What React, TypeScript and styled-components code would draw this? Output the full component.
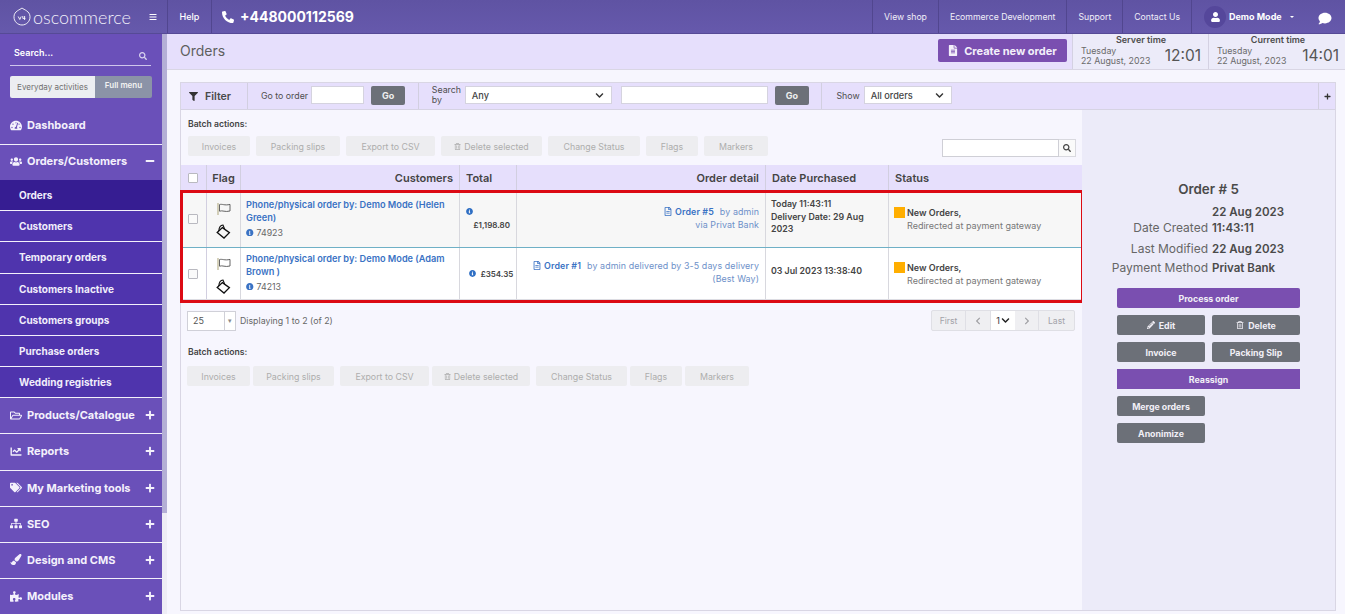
import styled, { createGlobalStyle } from "styled-components";
import {
  FaBars,
  FaChartLine,
  FaChevronDown,
  FaChevronLeft,
  FaChevronRight,
  FaComment,
  FaFileAlt,
  FaFilter,
  FaInfoCircle,
  FaMinus,
  FaPaintBrush,
  FaPencilAlt,
  FaPhoneAlt,
  FaPlus,
  FaPuzzlePiece,
  FaRegFileAlt,
  FaRegFolderOpen,
  FaRegTrashAlt,
  FaSearch,
  FaSitemap,
  FaTachometerAlt,
  FaTags,
  FaUser,
  FaUsers,
} from "react-icons/fa";

const GlobalStyle = createGlobalStyle`
  html, body {
    margin: 0;
    padding: 0;
    height: 100%;
    overflow: hidden;
    background: #f7f6fe;
    font-family: Inter, "Liberation Sans", sans-serif;
    color: #424242;
  }
  * { box-sizing: border-box; }
`;

const subMenu = [
  { name: "Orders", active: true },
  { name: "Customers" },
  { name: "Temporary orders" },
  { name: "Customers Inactive" },
  { name: "Customers groups" },
  { name: "Purchase orders" },
  { name: "Wedding registries" },
];

const lowerMenu = [
  { name: "Products/Catalogue", icon: <FaRegFolderOpen /> },
  { name: "Reports", icon: <FaChartLine /> },
  { name: "My Marketing tools", icon: <FaTags /> },
  { name: "SEO", icon: <FaSitemap /> },
  { name: "Design and CMS", icon: <FaPaintBrush /> },
  { name: "Modules", icon: <FaPuzzlePiece /> },
];

const topBatch = [
  { name: "Invoices", w: 62 },
  { name: "Packing slips", w: 84 },
  { name: "Export to CSV", w: 89 },
  { name: "Delete selected", w: 101, trash: true },
  { name: "Change Status", w: 92 },
  { name: "Flags", w: 52 },
  { name: "Markers", w: 64 },
];

const bottomBatch = [
  { name: "Invoices", w: 63 },
  { name: "Packing slips", w: 81 },
  { name: "Export to CSV", w: 89 },
  { name: "Delete selected", w: 98, trash: true },
  { name: "Change Status", w: 91 },
  { name: "Flags", w: 52 },
  { name: "Markers", w: 64 },
];

function FlagIcon() {
  return (
    <svg width="14" height="12" viewBox="0 0 14 12" fill="none">
      <path d="M1 0V12" stroke="#b5ad86" strokeWidth="1.1" />
      <path
        d="M2.5 1.6C5 0.6 7.5 2.8 13 1.4V8C8 9.4 5.5 7 2.5 8.2Z"
        stroke="#555"
        strokeWidth="0.9"
      />
    </svg>
  );
}

function MarkerIcon() {
  return (
    <svg width="15" height="15" viewBox="0 0 15 15" fill="none">
      <path d="M6.4 3.6L13.4 8.6L8 14L1.2 8.4Z" stroke="#111" strokeWidth="1.3" />
      <path d="M2.8 7C3 3.8 4.6 1.2 7 1L8.6 5" stroke="#111" strokeWidth="1.1" />
    </svg>
  );
}

function Logo() {
  return (
    <svg width="18" height="19" viewBox="0 0 18 19" fill="none">
      <path
        d="M9 1C11 2.8 16.8 4 17 9.6C17.2 14.4 13.4 18 9 18C4.6 18 0.8 14.4 1 9.6C1.2 4 7 2.8 9 1Z"
        stroke="#fff"
        strokeWidth="0.9"
      />
      <path d="M5.2 9.5L6.8 12.5L8.2 9.5M9.8 9V11.4H12.4M11.6 9V13" stroke="#fff" strokeWidth="0.9" />
    </svg>
  );
}

function BatchActions({ items }: { items: { name: string; w: number; trash?: boolean }[] }) {
  return (
    <BatchRow>
      {items.map((item) => (
        <BatchButton key={item.name} $w={item.w}>
          {item.trash && <FaRegTrashAlt />}
          {item.name}
        </BatchButton>
      ))}
    </BatchRow>
  );
}

export default function App() {
  return (
    <Page>
      <GlobalStyle />
      <TopBar>
        <Brand>
          <Logo />
          <BrandName>oscommerce</BrandName>
          <BurgerIcon />
        </Brand>
        <HelpLink>Help</HelpLink>
        <Phone>
          <FaPhoneAlt />
          +448000112569
        </Phone>
        <TopLinks>
          <TopLink>View shop</TopLink>
          <TopLink>Ecommerce Development</TopLink>
          <TopLink>Support</TopLink>
          <TopLink>Contact Us</TopLink>
        </TopLinks>
        <UserBox>
          <Avatar>
            <FaUser />
          </Avatar>
          <UserName>Demo Mode</UserName>
          <Caret />
          <ChatIcon />
        </UserBox>
      </TopBar>

      <Body>
        <Sidebar>
          <SearchBox>
            <SearchText>Search...</SearchText>
            <FaSearch />
          </SearchBox>
          <MenuToggle>
            <ToggleLeft>Everyday activities</ToggleLeft>
            <ToggleRight>Full menu</ToggleRight>
          </MenuToggle>
          <DashboardItem>
            <FaTachometerAlt />
            <span>Dashboard</span>
          </DashboardItem>
          <OpenItem>
            <FaUsers />
            <span>Orders/Customers</span>
            <MenuSign>
              <FaMinus />
            </MenuSign>
          </OpenItem>
          {subMenu.map((entry) => (
            <SubItem key={entry.name} $active={entry.active}>
              {entry.name}
            </SubItem>
          ))}
          {lowerMenu.map((entry) => (
            <MenuItem key={entry.name}>
              {entry.icon}
              <span>{entry.name}</span>
              <MenuSign>
                <FaPlus />
              </MenuSign>
            </MenuItem>
          ))}
        </Sidebar>
        <ScrollTrack>
          <ScrollThumb />
        </ScrollTrack>

        <Content>
          <TitleBar>
            <PageTitle>Orders</PageTitle>
            <CreateButton>
              <FaFileAlt />
              Create new order
            </CreateButton>
            <TimeBox>
              <TimeLabel>Server time</TimeLabel>
              <TimeRow>
                <TimeDate>
                  Tuesday
                  <br />
                  22 August, 2023
                </TimeDate>
                <Clock>12:01</Clock>
              </TimeRow>
            </TimeBox>
            <TimeBox>
              <TimeLabel>Current time</TimeLabel>
              <TimeRow>
                <TimeDate>
                  Tuesday
                  <br />
                  22 August, 2023
                </TimeDate>
                <Clock>14:01</Clock>
              </TimeRow>
            </TimeBox>
          </TitleBar>

          <Panel>
            <FilterBar>
              <FilterTitle>
                <FaFilter />
                Filter
              </FilterTitle>
              <FilterCell $w={171}>
                <FilterLabel>Go to order</FilterLabel>
                <TextBox $w={53} />
                <GoButton>Go</GoButton>
              </FilterCell>
              <FilterCell $w={404}>
                <SearchBy>Search by</SearchBy>
                <SelectBox $w={147}>
                  Any
                  <FaChevronDown />
                </SelectBox>
                <TextBox $w={147} $left={9} />
                <GoButton>Go</GoButton>
              </FilterCell>
              <ShowCell $w={496}>
                <FilterLabel>Show</FilterLabel>
                <SelectBox $w={88} $left={1}>
                  All orders
                  <FaChevronDown />
                </SelectBox>
              </ShowCell>
              <ExpandCell>
                <FaPlus />
              </ExpandCell>
            </FilterBar>

            <PanelBody>
              <ListArea>
                <BatchTitle>Batch actions:</BatchTitle>
                <BatchLine>
                  <BatchActions items={topBatch} />
                  <TableSearch>
                    <TableSearchInput />
                    <TableSearchButton>
                      <FaSearch />
                    </TableSearchButton>
                  </TableSearch>
                </BatchLine>

                <HeadRow>
                  <CheckCell>
                    <CheckBox $head />
                  </CheckCell>
                  <FlagHead>Flag</FlagHead>
                  <HeadCell $right>Customers</HeadCell>
                  <HeadCell>Total</HeadCell>
                  <HeadCell $right>Order detail</HeadCell>
                  <HeadCell>Date Purchased</HeadCell>
                  <HeadCell>Status</HeadCell>
                </HeadRow>

                <RowsFrame>
                  <OrderRow $h={57} $shaded>
                    <CheckCell>
                      <CheckBox />
                    </CheckCell>
                    <FlagCell>
                      <FlagIcon />
                      <MarkerIcon />
                    </FlagCell>
                    <CustomerCell $top={7}>
                      <CustomerLink>Phone/physical order by: Demo Mode (Helen Green)</CustomerLink>
                      <CustomerId>
                        <FaInfoCircle />
                        74923
                      </CustomerId>
                    </CustomerCell>
                    <TotalCell $stacked>
                      <FaInfoCircle />
                      <TotalValue>£1,198.80</TotalValue>
                    </TotalCell>
                    <DetailCell>
                      <div>
                        <FaRegFileAlt />
                        <OrderLink>Order #5</OrderLink>
                        <DetailGap />
                        by admin
                      </div>
                      <div>via Privat Bank</div>
                    </DetailCell>
                    <DateCell>
                      Today 11:43:11
                      <br />
                      Delivery Date: 29 Aug 2023
                    </DateCell>
                    <StatusCell>
                      <StatusSquare />
                      <div>
                        <StatusName>New Orders,</StatusName>
                        <StatusNote>Redirected at payment gateway</StatusNote>
                      </div>
                    </StatusCell>
                  </OrderRow>
                  <OrderRow $h={52}>
                    <CheckCell>
                      <CheckBox />
                    </CheckCell>
                    <FlagCell>
                      <FlagIcon />
                      <MarkerIcon />
                    </FlagCell>
                    <CustomerCell $top={4}>
                      <CustomerLink>Phone/physical order by: Demo Mode (Adam Brown )</CustomerLink>
                      <CustomerId>
                        <FaInfoCircle />
                        74213
                      </CustomerId>
                    </CustomerCell>
                    <TotalCell>
                      <FaInfoCircle />
                      <TotalValue>£354.35</TotalValue>
                    </TotalCell>
                    <DetailCell>
                      <div>
                        <FaRegFileAlt />
                        <OrderLink>Order #1</OrderLink>
                        <DetailGap />
                        by admin delivered by 3-5 days delivery
                      </div>
                      <div>(Best Way)</div>
                    </DetailCell>
                    <DateCell>03 Jul 2023 13:38:40</DateCell>
                    <StatusCell>
                      <StatusSquare />
                      <div>
                        <StatusName>New Orders,</StatusName>
                        <StatusNote>Redirected at payment gateway</StatusNote>
                      </div>
                    </StatusCell>
                  </OrderRow>
                </RowsFrame>

                <PagerRow>
                  <PerPage>
                    <PerPageValue>25</PerPageValue>
                    <PerPageArrow>▾</PerPageArrow>
                  </PerPage>
                  <Displaying>Displaying 1 to 2 (of 2)</Displaying>
                  <Pager>
                    <PagerCell $w={34}>First</PagerCell>
                    <PagerCell $w={25}>
                      <FaChevronLeft />
                    </PagerCell>
                    <PagerCurrent>
                      1
                      <FaChevronDown />
                    </PagerCurrent>
                    <PagerCell $w={24}>
                      <FaChevronRight />
                    </PagerCell>
                    <PagerCell $w={35}>Last</PagerCell>
                  </Pager>
                </PagerRow>

                <BatchTitle $lower>Batch actions:</BatchTitle>
                <BottomBatch>
                  <BatchActions items={bottomBatch} />
                </BottomBatch>
              </ListArea>

              <OrderPanel>
                <OrderTitle>Order # 5</OrderTitle>
                <OrderFacts>
                  <FactLabel>Date Created</FactLabel>
                  <FactValue>22 Aug 2023 11:43:11</FactValue>
                  <FactLabel $tall>Last Modified</FactLabel>
                  <FactValue $tall>22 Aug 2023</FactValue>
                  <FactLabel>Payment Method</FactLabel>
                  <FactValue>Privat Bank</FactValue>
                </OrderFacts>
                <Actions>
                  <ActionButton $wide $purple>Process order</ActionButton>
                  <ActionButton>
                    <FaPencilAlt />
                    Edit
                  </ActionButton>
                  <ActionButton>
                    <FaRegTrashAlt />
                    Delete
                  </ActionButton>
                  <ActionButton>Invoice</ActionButton>
                  <ActionButton>Packing Slip</ActionButton>
                  <ActionButton $wide $purple $square>Reassign</ActionButton>
                  <ActionButton>Merge orders</ActionButton>
                  <ActionSpacer />
                  <ActionButton>Anonimize</ActionButton>
                </Actions>
              </OrderPanel>
            </PanelBody>
          </Panel>
        </Content>
      </Body>
    </Page>
  );
}

const Page = styled.div`
  width: 1345px;
  height: 614px;
  display: flex;
  flex-direction: column;
  overflow: hidden;
`;

const TopBar = styled.header`
  flex: 0 0 34px;
  display: flex;
  align-items: stretch;
  color: #fff;
  background: linear-gradient(#5f53a3, #6659ac);
  border-bottom: 1px solid #564a96;
`;

const Brand = styled.div`
  width: 168px;
  display: flex;
  align-items: center;
  padding: 0 10px 0 13px;
  border-right: 1px solid #51468f;

  svg:first-child {
    flex: none;
  }
`;

const BrandName = styled.span`
  font-family: Lato, "Open Sans", sans-serif;
  font-weight: 300;
  font-size: 18px;
  margin-left: 2px;
  color: #f1effa;
`;

const BurgerIcon = styled(FaBars)`
  width: 8px;
  height: 8px;
  margin-left: auto;
`;

const HelpLink = styled.div`
  width: 44px;
  display: flex;
  align-items: center;
  justify-content: center;
  font-size: 9px;
  font-weight: 500;
  border-right: 1px solid #51468f;
`;

const Phone = styled.div`
  flex: 1;
  display: flex;
  align-items: center;
  gap: 6px;
  padding-left: 10px;
  font-size: 14px;
  font-weight: 700;

  svg {
    width: 12px;
    height: 12px;
  }
`;

const TopLinks = styled.nav`
  display: flex;
`;

const TopLink = styled.div`
  display: flex;
  align-items: center;
  padding: 0 11px;
  font-size: 8.7px;
  border-left: 1px solid #51468f;
  color: #f0eef8;
`;

const UserBox = styled.div`
  width: 154px;
  display: flex;
  align-items: center;
  padding-left: 12px;
  border-left: 1px solid #51468f;
`;

const Avatar = styled.div`
  width: 22px;
  height: 22px;
  border-radius: 50%;
  background: #55479b;
  display: flex;
  align-items: center;
  justify-content: center;

  svg {
    width: 9px;
    height: 10px;
  }
`;

const UserName = styled.span`
  font-size: 9px;
  font-weight: 700;
  margin-left: 3px;
`;

const Caret = styled.span`
  margin-left: 8px;
  border: 2.5px solid transparent;
  border-top-color: #fff;
  margin-top: 3px;
`;

const ChatIcon = styled(FaComment)`
  width: 14px;
  height: 13px;
  margin-left: 24px;
  margin-top: 3px;
`;

const Body = styled.div`
  flex: 1;
  display: flex;
  min-height: 0;
`;

const Sidebar = styled.aside`
  width: 162px;
  flex: none;
  background: #6a50b9;
  color: #fff;
`;

const SearchBox = styled.div`
  height: 32px;
  margin: 0 11px 0 10px;
  padding: 13px 4px 0;
  display: flex;
  justify-content: space-between;
  border-bottom: 1px solid #cfc6ec;

  svg {
    width: 8px;
    height: 8px;
    margin-top: 5px;
    color: #d9d3ef;
  }
`;

const SearchText = styled.span`
  font-size: 9px;
  font-weight: 600;
`;

const MenuToggle = styled.div`
  margin: 10px 10px 0;
  height: 22px;
  display: flex;
  border-radius: 2px;
  overflow: hidden;
  font-size: 8px;
`;

const ToggleLeft = styled.div`
  width: 85px;
  display: flex;
  align-items: center;
  justify-content: center;
  background: #eceef1;
  color: #707070;
`;

const ToggleRight = styled.div`
  flex: 1;
  padding-top: 4px;
  text-align: center;
  font-weight: 600;
  background: #8b93a7;
  color: #f2f2f2;
`;

const MenuItem = styled.div`
  height: 36.1px;
  padding: 0 0 1px 10px;
  display: flex;
  align-items: center;
  gap: 5px;
  font-size: 11px;
  font-weight: 700;
  color: #f4f1fc;
  border-bottom: 1px solid #f3f0fb;

  &:last-child {
    border-bottom: 0;
  }

  > svg {
    width: 12px;
    height: 11px;
    flex: none;
  }
`;

const DashboardItem = styled(MenuItem)`
  height: 47px;
  padding: 8px 0 0 10px;
`;

const OpenItem = styled(MenuItem)`
  height: 35px;
  padding-bottom: 3px;
  border-bottom: 0;
`;

const MenuSign = styled.span`
  margin-left: auto;
  margin-right: 7px;
  display: flex;

  svg {
    width: 10px;
    height: 10px;
  }
`;

const SubItem = styled.div<{ $active?: boolean }>`
  height: 31.2px;
  padding-left: 19px;
  display: flex;
  align-items: center;
  font-size: 10px;
  font-weight: 700;
  color: #f1eefb;
  background: ${(p) => (p.$active ? "#361d92" : "#4f34ad")};
  border-bottom: 1px solid #f3f0fb;
`;

const ScrollTrack = styled.div`
  width: 5px;
  flex: none;
  background: #eeedf5;
`;

const ScrollThumb = styled.div`
  height: 479px;
  background: #b4afd6;
`;

const Content = styled.main`
  flex: 1;
  min-width: 0;
  display: flex;
  flex-direction: column;
`;

const TitleBar = styled.div`
  flex: 0 0 36px;
  display: flex;
  align-items: stretch;
  background: #e6dffc;
  border-bottom: 1px solid #d9d6e4;
`;

const PageTitle = styled.h1`
  flex: 1;
  margin: 0;
  padding: 8px 0 0 13px;
  font-size: 14px;
  font-weight: 400;
  color: #5f5f5f;
`;

const CreateButton = styled.button`
  width: 129px;
  height: 23px;
  margin: 5px 5px 0 0;
  padding: 0;
  border: 0;
  border-radius: 2px;
  display: flex;
  align-items: center;
  justify-content: center;
  gap: 6px;
  font: 700 11px Inter, sans-serif;
  color: #f3effa;
  background: #7a4fb0;

  svg {
    width: 10px;
    height: 11px;
  }
`;

const TimeBox = styled.div`
  width: 136px;
  padding: 1px 7px 0 8px;
  border-left: 1px solid #d4d1e2;
  background: #ecebf9;

  &:last-child {
    width: 137px;
    padding-right: 6px;
  }
`;

const TimeLabel = styled.div`
  text-align: center;
  font-size: 9px;
  font-weight: 600;
  line-height: 10px;
  color: #4e4e4e;
  margin-bottom: 1px;
`;

const TimeRow = styled.div`
  display: flex;
  justify-content: space-between;
  align-items: flex-end;
`;

const TimeDate = styled.div`
  font-size: 8.8px;
  line-height: 10px;
  color: #6a6a6a;
`;

const Clock = styled.div`
  font-size: 15.5px;
  line-height: 18px;
  margin-bottom: 1px;
  color: #555;
`;

const Panel = styled.section`
  width: 1156px;
  height: 529px;
  margin: 12px 0 0 13px;
  border: 1px solid #d9d6e4;
  display: flex;
  flex-direction: column;
  background: #f7f6fe;
`;

const FilterBar = styled.div`
  flex: 0 0 27px;
  display: flex;
  background: #e6dffc;
  border-bottom: 1px solid #d6d3e3;
`;

const FilterTitle = styled.div`
  width: 67px;
  display: flex;
  align-items: center;
  gap: 7px;
  padding-left: 8px;
  font-size: 10.6px;
  font-weight: 600;
  color: #4a4a4a;
  border-right: 1px solid #d2cfe0;

  svg {
    width: 9px;
    height: 9px;
    color: #333;
  }
`;

const FilterCell = styled.div<{ $w: number }>`
  width: ${(p) => p.$w}px;
  display: flex;
  align-items: center;
  padding: 0 0 2px 13px;
  border-right: 1px solid #d2cfe0;
`;

const ShowCell = styled(FilterCell)`
  padding-left: 14px;
  border-right: 0;
`;

const FilterLabel = styled.span`
  font-size: 8.8px;
  color: #4e4e4e;
  margin-right: 3px;
`;

const SearchBy = styled.span`
  width: 33px;
  font-size: 8.8px;
  line-height: 10px;
  color: #4e4e4e;
`;

const TextBox = styled.div<{ $w: number; $left?: number }>`
  width: ${(p) => p.$w}px;
  height: 18px;
  margin-left: ${(p) => p.$left ?? 0}px;
  background: #fff;
  border: 1px solid #d5d3df;
`;

const GoButton = styled.div`
  width: 34px;
  height: 19px;
  margin-left: 7px;
  display: flex;
  align-items: center;
  justify-content: center;
  border-radius: 2px;
  font-size: 9px;
  font-weight: 700;
  color: #eee;
  background: #6c7078;
`;

const SelectBox = styled.div<{ $w: number; $left?: number }>`
  width: ${(p) => p.$w}px;
  height: 18px;
  margin-left: ${(p) => p.$left ?? 0}px;
  padding: 0 7px 0 6px;
  display: flex;
  align-items: center;
  justify-content: space-between;
  font-size: 9.2px;
  font-weight: 500;
  color: #444;
  background: #fff;
  border: 1px solid #d5d3df;

  svg {
    width: 9px;
    height: 9px;
    color: #333;
  }
`;

const ExpandCell = styled.div`
  margin-left: auto;
  width: 17px;
  display: flex;
  align-items: center;
  justify-content: center;
  border-left: 1px solid #d2cfe0;

  svg {
    width: 7px;
    height: 7px;
    color: #333;
  }
`;

const PanelBody = styled.div`
  flex: 1;
  display: flex;
  min-height: 0;
`;

const ListArea = styled.div`
  width: 901px;
  flex: none;
`;

const BatchTitle = styled.div<{ $lower?: boolean }>`
  margin: ${(p) => (p.$lower ? "16px 0 0 7px" : "9px 0 0 7px")};
  font-size: 8.6px;
  line-height: 11px;
  font-weight: 600;
  color: #444;
`;

const BatchLine = styled.div`
  height: 29px;
  margin-top: 6px;
  padding: 0 6px 0 7px;
  display: flex;
  justify-content: space-between;
`;

const BatchRow = styled.div`
  display: flex;
  gap: 6px;
  height: 20px;
`;

const BatchButton = styled.div<{ $w: number }>`
  width: ${(p) => p.$w}px;
  display: flex;
  align-items: center;
  justify-content: center;
  gap: 3px;
  border-radius: 2px;
  font-size: 8.8px;
  color: #adadad;
  background: #ededf0;

  svg {
    width: 7px;
    height: 7px;
  }
`;

const BottomBatch = styled.div`
  margin: 8px 0 0 6px;

  ${BatchRow} {
    gap: 3px;
  }

  ${BatchButton}:nth-child(3), ${BatchButton}:nth-child(5) {
    margin-left: 3px;
  }
`;

const TableSearch = styled.div`
  display: flex;
  height: 18px;
  margin-top: 3px;
`;

const TableSearchInput = styled.div`
  width: 117px;
  background: #fff;
  border: 1px solid #cfcfd6;
`;

const TableSearchButton = styled.div`
  width: 17px;
  display: flex;
  align-items: center;
  justify-content: center;
  background: #fafafa;
  border: 1px solid #d9d9df;
  border-left: 0;

  svg {
    width: 8px;
    height: 8px;
    color: #444;
  }
`;

const columns = "26px 34px 219px 57px 249px 123px 193px";

const HeadRow = styled.div`
  height: 25px;
  display: grid;
  grid-template-columns: ${columns};
  background: #e6dffc;
`;

const HeadCell = styled.div<{ $right?: boolean }>`
  display: flex;
  align-items: center;
  justify-content: ${(p) => (p.$right ? "flex-end" : "flex-start")};
  padding: 0 6px;
  font-size: 11px;
  font-weight: 600;
  color: #444;
  border-right: 1px solid #d2cfe0;

  &:last-child {
    border-right: 0;
  }
`;

const FlagHead = styled(HeadCell)`
  justify-content: center;
  padding: 0;
`;

const RowsFrame = styled.div`
  width: 904px;
  height: 113px;
  margin-left: -1px;
  padding: 1px 0 0 1px;
  outline: 3px solid #dc0a14;
  outline-offset: -3px;
`;

const OrderRow = styled.div<{ $h: number; $shaded?: boolean }>`
  width: 901px;
  height: ${(p) => p.$h}px;
  display: grid;
  grid-template-columns: ${columns};
  background: ${(p) => (p.$shaded ? "#f7f7f7" : "#fff")};
  border-bottom: 1px solid ${(p) => (p.$shaded ? "#6fb0c6" : "#dcdce2")};

  > * {
    border-right: 1px solid #d8d8de;
  }

  > *:last-child {
    border-right: 0;
  }
`;

const CheckCell = styled.div`
  display: flex;
  align-items: center;
  justify-content: center;
  padding-right: 2px;
  border-right: 1px solid #d2cfe0;
`;

const CheckBox = styled.div<{ $head?: boolean }>`
  width: 10px;
  height: 10px;
  border: 1px solid #b9b9c0;
  border-radius: 1px;
  background: ${(p) => (p.$head ? "#fff" : "#fafafa")};
`;

const FlagCell = styled.div`
  display: flex;
  flex-direction: column;
  align-items: center;
  justify-content: center;
  gap: 9px;
  padding-top: 4px;
`;

const CustomerCell = styled.div<{ $top: number }>`
  padding: ${(p) => p.$top}px 6px 0 5px;
`;

const CustomerLink = styled.div`
  font-size: 9.2px;
  line-height: 13px;
  font-weight: 600;
  color: #3a72c4;
`;

const CustomerId = styled.div`
  display: flex;
  align-items: center;
  gap: 3px;
  margin-top: 3px;
  font-size: 8.8px;
  line-height: 11px;
  color: #666;

  svg {
    width: 7.5px;
    height: 7.5px;
    color: #3a72c4;
  }
`;

const TotalCell = styled.div<{ $stacked?: boolean }>`
  display: flex;
  flex-direction: ${(p) => (p.$stacked ? "column" : "row")};
  align-items: ${(p) => (p.$stacked ? "flex-start" : "center")};
  justify-content: center;
  gap: 5px;
  padding: 0 0 0 6px;

  svg {
    width: 7px;
    height: 7px;
    color: #2f6fc4;
  }

  span {
    align-self: ${(p) => (p.$stacked ? "flex-end" : "auto")};
    padding-right: ${(p) => (p.$stacked ? "6px" : "0")};
  }
`;

const TotalValue = styled.span`
  font-size: 8px;
  font-weight: 600;
  color: #444;
`;

const DetailCell = styled.div`
  display: flex;
  flex-direction: column;
  justify-content: center;
  align-items: flex-end;
  padding: 0 6px 3px 0;
  font-size: 8.9px;
  line-height: 13px;
  letter-spacing: 0.1px;
  color: #6d90c9;

  svg {
    width: 8px;
    height: 9px;
    color: #3a72c4;
    vertical-align: -1px;
    margin-right: 3px;
  }
`;

const OrderLink = styled.span`
  font-weight: 600;
  color: #3a72c4;
`;

const DetailGap = styled.span`
  display: inline-block;
  width: 6px;
`;

const DateCell = styled.div`
  display: flex;
  align-items: center;
  padding: 0 6px 4px 5px;
  font-size: 8.8px;
  line-height: 12.5px;
  font-weight: 600;
  color: #444;
`;

const StatusCell = styled.div`
  display: flex;
  align-items: center;
  gap: 2px;
  padding: 0 0 0 5px;
`;

const StatusSquare = styled.span`
  flex: none;
  width: 11px;
  height: 11px;
  margin-bottom: 13px;
  background: #ffae00;
`;

const StatusName = styled.div`
  font-size: 9px;
  line-height: 13px;
  font-weight: 600;
  color: #444;
`;

const StatusNote = styled.div`
  font-size: 9px;
  line-height: 13px;
  color: #777;
`;

const PagerRow = styled.div`
  height: 21px;
  margin-top: 7px;
  padding: 0 7px 0 6px;
  display: flex;
  align-items: center;
`;

const PerPage = styled.div`
  width: 49px;
  height: 20px;
  display: flex;
  background: #fff;
  border: 1px solid #d0d0d8;
`;

const PerPageValue = styled.div`
  flex: 1;
  padding-left: 5px;
  font-size: 9px;
  line-height: 17px;
  color: #555;
`;

const PerPageArrow = styled.div`
  width: 11px;
  border-left: 1px solid #d0d0d8;
  font-size: 7px;
  line-height: 18px;
  text-align: center;
  color: #888;
`;

const Displaying = styled.span`
  margin-left: 4px;
  font-size: 8.8px;
  color: #666;
`;

const Pager = styled.div`
  margin-left: auto;
  height: 21px;
  display: flex;
  background: #efeff2;
  border: 1px solid #dfdfe5;
  border-radius: 2px;
`;

const PagerCell = styled.div<{ $w: number }>`
  width: ${(p) => p.$w}px;
  display: flex;
  align-items: center;
  justify-content: center;
  font-size: 8.6px;
  color: #a2a2a8;
  border-right: 1px solid #dfdfe5;

  &:last-child {
    border-right: 0;
  }

  svg {
    width: 8px;
    height: 8px;
    color: #a0a0a4;
  }
`;

const PagerCurrent = styled.div`
  width: 24px;
  display: flex;
  align-items: center;
  justify-content: center;
  gap: 1px;
  font-size: 9px;
  color: #333;
  background: #fff;

  svg {
    width: 9px;
    height: 9px;
    color: #222;
  }
`;

const OrderPanel = styled.aside`
  flex: 1;
  padding-top: 71px;
  background: #ecebf9;
`;

const OrderTitle = styled.div`
  text-align: center;
  font-size: 13.4px;
  font-weight: 600;
  line-height: 16px;
  color: #4a4a4a;
`;

const OrderFacts = styled.div`
  margin-top: 4px;
  display: grid;
  grid-template-columns: 126px 74px;
  column-gap: 4px;
  align-items: end;
  font-size: 11.5px;
  line-height: 16px;
`;

const FactLabel = styled.div<{ $tall?: boolean }>`
  text-align: right;
  font-size: 12px;
  color: #666;
  white-space: nowrap;
  margin-top: ${(p) => (p.$tall ? "5px" : "3px")};
`;

const FactValue = styled.div<{ $tall?: boolean }>`
  font-weight: 600;
  color: #4a4a4a;
  margin-top: ${(p) => (p.$tall ? "5px" : "3px")};
`;

const Actions = styled.div`
  width: 183px;
  margin: 12px 0 0 35px;
  display: grid;
  grid-template-columns: 88px 88px;
  justify-content: space-between;
  row-gap: 7px;
`;

const ActionButton = styled.div<{ $wide?: boolean; $purple?: boolean; $square?: boolean }>`
  grid-column: ${(p) => (p.$wide ? "1 / -1" : "auto")};
  height: 20px;
  display: flex;
  align-items: center;
  justify-content: center;
  gap: 4px;
  border-radius: ${(p) => (p.$square ? "0" : "2px")};
  font-size: 8.8px;
  font-weight: 700;
  color: #f1eff6;
  background: ${(p) => (p.$purple ? "#7a4fb0" : "#6c7078")};

  svg {
    width: 8px;
    height: 8px;
  }
`;

const ActionSpacer = styled.div``;
